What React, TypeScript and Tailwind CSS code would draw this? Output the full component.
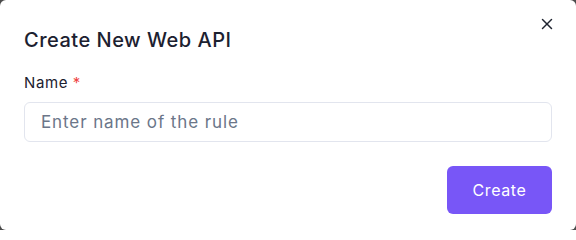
import { X } from "lucide-react";

export default function App() {
  return (
    <div className="h-[230px] w-[576px] bg-[#4b4b4b]" style={{ fontFamily: "Inter, 'Noto Sans', sans-serif" }}>
      <div className="relative h-full w-full rounded-[6px] bg-white px-6 pt-[27px]">
        <button className="absolute right-[20px] top-[15px] text-[#1f2430]">
          <X size={18} strokeWidth={2} />
        </button>
        <h2 className="text-[20px] font-medium leading-[26px] tracking-[0.5px] text-[#1c2130]">Create New Web API</h2>
        <label className="mt-[20px] block text-[15px] leading-[20px] tracking-[0.6px] text-[#1c2130]">
          Name <span className="text-[#ef4444]">*</span>
        </label>
        <input
          className="mt-[9px] h-[40px] w-full rounded-[6px] border border-[#e2e5ee] px-4 text-[17px] tracking-[0.9px] text-[#1c2130] outline-none placeholder:text-[#6b7689]"
          placeholder="Enter name of the rule"
        />
        <div className="mt-[24px] flex justify-end">
          <button className="h-[48px] w-[105px] rounded-[6px] bg-[#7856f7] text-[16px] tracking-[0.6px] text-white">Create</button>
        </div>
      </div>
    </div>
  );
}
